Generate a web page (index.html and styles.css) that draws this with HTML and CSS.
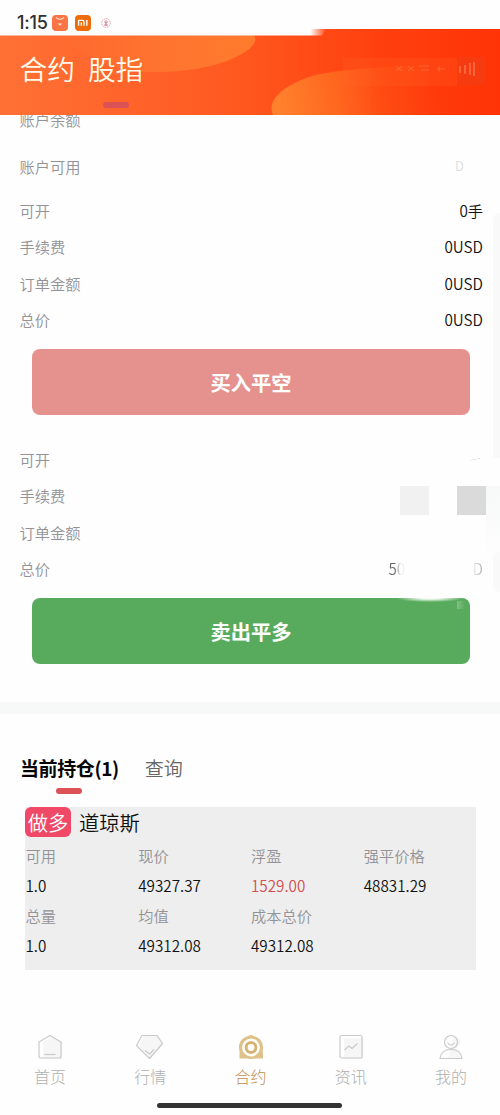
FILE: index.html
```html
<!DOCTYPE html>
<html lang="zh-CN">
<head>
<meta charset="utf-8">
<title>合约</title>
<link rel="stylesheet" href="styles.css">
</head>
<body>
<div class="status">
  <span class="clock">1:15</span>
  <svg class="app" viewBox="0 0 16 16"><rect width="16" height="16" rx="4" fill="#fa7445"/><path d="M4 2.500Q8 6.400 12 2.500" fill="none" stroke="#ffd3bd" stroke-width="1.100"/><path d="M5.800 8.500h4.400L8 10.800z" fill="#ffe5d9"/></svg>
  <svg class="app mi" viewBox="0 0 16 16"><rect width="16" height="16" rx="4" fill="#ef6c0a"/><path d="M3.600 10.700V5.400h3.600q1.800 0 1.800 1.600v3.700M6.300 7.400v3.300M11.800 5v5.700" fill="none" stroke="#fff" stroke-width="1.400"/></svg>
  <svg class="app seal" viewBox="0 0 16 16"><circle cx="8" cy="8" r="4.300" fill="none" stroke="#e0a0ae" stroke-dasharray="1.500 .7"/><path d="M8 5v6M6 6.500l2 1.800 2-1.800M6 10h4" fill="none" stroke="#c77b8c" stroke-width=".9"/></svg>
</div>
<header class="top">
  <svg class="art" viewBox="0 0 500 86" preserveAspectRatio="none">
    <defs>
      <linearGradient id="base"><stop offset="0" stop-color="#ff7136"/><stop offset=".48" stop-color="#ff581f"/><stop offset=".72" stop-color="#ff4311"/><stop offset="1" stop-color="#ff3306"/></linearGradient>
      <linearGradient id="wave"><stop offset="0" stop-color="#ff7634" stop-opacity="0"/><stop offset=".5" stop-color="#ff7430"/><stop offset="1" stop-color="#ff7b2d"/></linearGradient>
      <linearGradient id="hill" gradientUnits="userSpaceOnUse" x1="280" y1="86" x2="440" y2="60"><stop offset="0" stop-color="#ff812d"/><stop offset=".35" stop-color="#ff681f"/><stop offset="1" stop-color="#ff4812" stop-opacity="0"/></linearGradient>
      <linearGradient id="fade"><stop offset="0" stop-color="#fff"/><stop offset="1" stop-color="#fff" stop-opacity="0"/></linearGradient>
    </defs>
    <rect width="500" height="86" fill="url(#base)"/>
    <path d="M60 6H254Q259 14 245 23C222 38 185 44 142 43Q95 39 60 6Z" fill="url(#wave)"/>
    <path d="M273 86C267 73 279 58 312 47Q365 34 500 38V86Z" fill="url(#hill)"/>
    <path d="M343 29H457V57H343Z" fill="#ff6a2b" opacity=".22"/>
    <path d="M371 0h29v86h-29zM428 0h28v86h-28z" fill="#ff3907" opacity=".1"/>
    <path d="M457 28h28v28h-28z" fill="#f04018" opacity=".55"/>
    <path d="M396 37l6 5m0-5l-6 5M408 37l6 5m0-5l-6 5M419 37h10m-8 4h8M437 40h8m-6-3v6" fill="none" stroke="#ff7541" stroke-width="1" opacity=".7"/>
    <path d="M460 37v7M465 36v9M470 34v12M474 33v14" stroke="#ff9b78" stroke-width="1.200" opacity=".7"/>
    <path d="M0 0H310V6.500H0Z" fill="#fefefe"/><path d="M310 0h16l-4 6.500h-12Z" fill="url(#fade)"/>
  </svg>
  <nav class="modes"><span>合约</span><span class="picked">股指</span></nav>
</header>
<main>
  <section class="account"><p class="cut">账户余额</p><p class="row">账户可用<span class="ghost">D</span></p></section>
  <section class="quote">
    <p class="row">可开<b>0手</b></p><p class="row">手续费<b>0USD</b></p><p class="row">订单金额<b>0USD</b></p><p class="row">总价<b>0USD</b></p>
    <button class="buy">买入平空</button>
  </section>
  <section class="quote second">
    <p class="row">可开<b class="trace">手</b></p><p class="row">手续费<span class="blocks"><i></i><i></i></span></p><p class="row">订单金额</p><p class="row">总价<b class="masked"><span>50</span><span>D</span></b></p>
    <button class="sell">卖出平多</button>
  </section>
  <div class="edge upper"></div><div class="edge middle"></div><div class="edge lower"></div>
  <div class="divider"></div>
  <nav class="tabs"><span class="picked">当前持仓(1)</span><span>查询</span></nav>
  <section class="position">
    <h2><em>做多</em>道琼斯</h2>
    <div class="grid">
      <label>可用</label><label>现价</label><label>浮盈</label><label>强平价格</label>
      <span>1.0</span><span>49327.37</span><span class="gain">1529.00</span><span>48831.29</span>
      <label>总量</label><label>均值</label><label>成本总价</label><label></label>
      <span>1.0</span><span>49312.08</span><span>49312.08</span>
    </div>
  </section>
</main>
<footer class="bottom">
  <nav>
    <a><svg viewBox="0 0 30 28"><path d="M8 9 17 4 27.500 9V26H8Z" class="soft"/><path d="M4 9 15 2.500 26 9V23Q26 25 24 25H6Q4 25 4 23Z" class="line"/><path d="M9.500 21.500h11" class="line"/></svg>首页</a>
    <a><svg viewBox="0 0 30 28"><path d="M9 3h15l4 7-13 16L4 12Z" class="soft"/><path d="M7 2.500H22L27.500 10.500 14.500 25.500 1.500 12.500Z" class="line"/><path d="M10 17.500l4.500 3.500 4.500-4.500" class="line"/></svg>行情</a>
    <a class="picked"><svg viewBox="0 0 30 28"><path d="M15 1.800 18.500 3.300C24 5 27 9 27 14.500c0 2.500-.5 4 0 6v5h-7L15 26l-5-.5H3.500v-5c.5-2-.5-3.500-.5-6C3 9 6 5 11.500 3.300Z" fill="#dfc18b"/><circle cx="15" cy="14.500" r="7.600" fill="none" stroke="#fffdf8" stroke-width="2.700"/><circle cx="15" cy="14.500" r="4.800" fill="none" stroke="#d5b273" stroke-width="2.800"/><circle cx="15" cy="14.500" r="3.400" fill="#fffdf8"/></svg>合约</a>
    <a><svg viewBox="0 0 30 28"><path d="M8 5h19.500v21H8Z" class="soft"/><rect x="4" y="2.500" width="22" height="22.500" rx="1.500" class="line"/><path d="M8.500 17l4.500-4 3 2.500 5.500-5" class="line"/></svg>资讯</a>
    <a><svg viewBox="0 0 30 28"><path d="M18 3q7 1 7 7l-5 6q5 2 6 9H12Z" class="soft"/><circle cx="15" cy="9" r="6.500" class="line"/><path d="M11.500 9.500q3.500 5 7 0M4 25.500q1-9 11-9t11 9Z" class="line"/></svg>我的</a>
  </nav>
  <div class="home"></div>
</footer>
</body>
</html>
```
FILE: styles.css
```css
* { box-sizing: border-box; }
body { margin: 0; width: 500px; height: 1115px; overflow: hidden; background: #fefefe; color: #111; font: 350 15.250px/36.250px "Noto Sans CJK SC", sans-serif; display: flex; flex-direction: column; }
p, h2 { margin: 0; }
b { font-weight: 350; }
.status { height: 29px; flex: none; display: flex; align-items: flex-start; padding: 15px 0 0 17px; position: relative; z-index: 1; }
.clock { font: 500 18px/16px Inter, sans-serif; width: 35px; color: #303030; letter-spacing: -.2px; }
.app { width: 16px; height: 16px; flex: none; }
.mi { margin-left: 7px; }
.seal { margin-left: 7px; }
.top { height: 86px; flex: none; position: relative; }
.art { position: absolute; width: 500px; height: 86px; }
.modes { position: relative; display: flex; gap: 13px; padding: 19px 0 0 19.500px; color: #fffae9; font-size: 27.700px; font-weight: 350; line-height: 40px; }
.modes .picked::after { content: ""; display: block; width: 26px; height: 6px; border-radius: 3px; background: #dc5155; margin: 14px auto 0; }
main { position: relative; }
.account { height: 77px; color: #929297; }
.cut { padding-left: 19.500px; height: 33px; line-height: 8px; clip-path: inset(0 0 0 0); }
.row { height: 36.250px; display: flex; justify-content: space-between; padding: 0 17px 0 19.500px; color: #929297; }
.row b { color: #111; }
.row .ghost { color: #dedede; margin-right: 19px; font-size: 13px; }
.quote button { display: block; width: 438px; height: 66px; margin: 12px 0 0 32px; border: 0; border-radius: 8px; color: #fff; font: 700 20.300px/66px "Noto Sans CJK SC", sans-serif; padding: 0; }
.quote .buy { background: #e5918e; }
.quote .sell { background: radial-gradient(ellipse at 50% 0, #f2faf2 20%, #58ab5d00 72%) 365px 0/66px 4px no-repeat, linear-gradient(90deg, #84bf87, #58ab5d) 425px 3px/8px 8px no-repeat, #58ab5d; }
.second { padding-top: 26px; }
.row .trace { color: transparent; background: linear-gradient(170deg, transparent 50%, #ddd 51%, transparent 56%) center/10px 18px no-repeat; }
.blocks { display: flex; gap: 28px; align-items: center; margin-right: -3px; padding-top: 10px; }
.blocks i { width: 29px; height: 29px; background: #f1f1f1; }
.blocks i + i { background: #dadada; }
.row .masked { width: 94.500px; display: flex; justify-content: space-between; }
.masked span { color: transparent; background: linear-gradient(90deg, #666 35%, #eee 75%); background-clip: text; }
.masked span + span { background: linear-gradient(90deg, #eee, #aaa); background-clip: text; }
.edge { position: absolute; right: 0; background: #f9f9fa; }
.upper { top: 98px; width: 7px; height: 245px; border-radius: 7px 0 0 0; }
.middle { top: 371px; width: 14px; height: 77px; background: linear-gradient(#f7f8f8, #fefefe); }
.lower { top: 437px; width: 7px; height: 40px; border-radius: 7px 0 0 7px; }
.divider { height: 12px; margin-top: 38px; background: #f7f8f8; }
.tabs { height: 92.500px; padding: 40px 0 0 20px; display: flex; gap: 26px; font-size: 19px; line-height: 28px; color: #666; }
.tabs .picked { color: #050505; font-weight: 700; letter-spacing: -.4px; }
.tabs .picked::after { content: ""; display: block; width: 26px; height: 6px; border-radius: 3px; background: #dc5155; margin: 6px auto 0; }
.position { margin-left: 25px; width: 451px; height: 163px; background: #eee; }
.position h2 { height: 33px; display: flex; align-items: flex-start; gap: 8px; font-size: 20.300px; line-height: 31px; font-weight: 350; }
.position em { width: 46px; height: 30px; line-height: 31px; text-align: center; font-style: normal; color: #fff; background: #f04867; border-radius: 6px; white-space: nowrap; }
.grid { display: grid; grid-template-columns: repeat(4, 112.750px); grid-auto-rows: 30px; line-height: 30px; padding-left: .5px; }
.grid label { color: #929297; }
.grid .gain { color: #d34f50; }
.bottom { margin-top: auto; height: 86px; flex: none; }
.bottom nav { display: grid; grid-template-columns: repeat(5, 100.250px); height: 67px; padding-top: 4px; }
.bottom a { display: flex; flex-direction: column; align-items: center; color: #b0b0b0; font-size: 16px; line-height: 30px; font-weight: 300; }
.bottom svg { width: 30px; height: 28px; display: block; }
.bottom .picked { color: #c08d4c; }
.line { fill: none; stroke: #cacaca; stroke-width: 1.200; stroke-linejoin: round; }
.soft { fill: #f6f6f6; }
.home { width: 185px; height: 5px; margin: 6.500px 0 0 157px; border-radius: 3px; background: #333; }
```
